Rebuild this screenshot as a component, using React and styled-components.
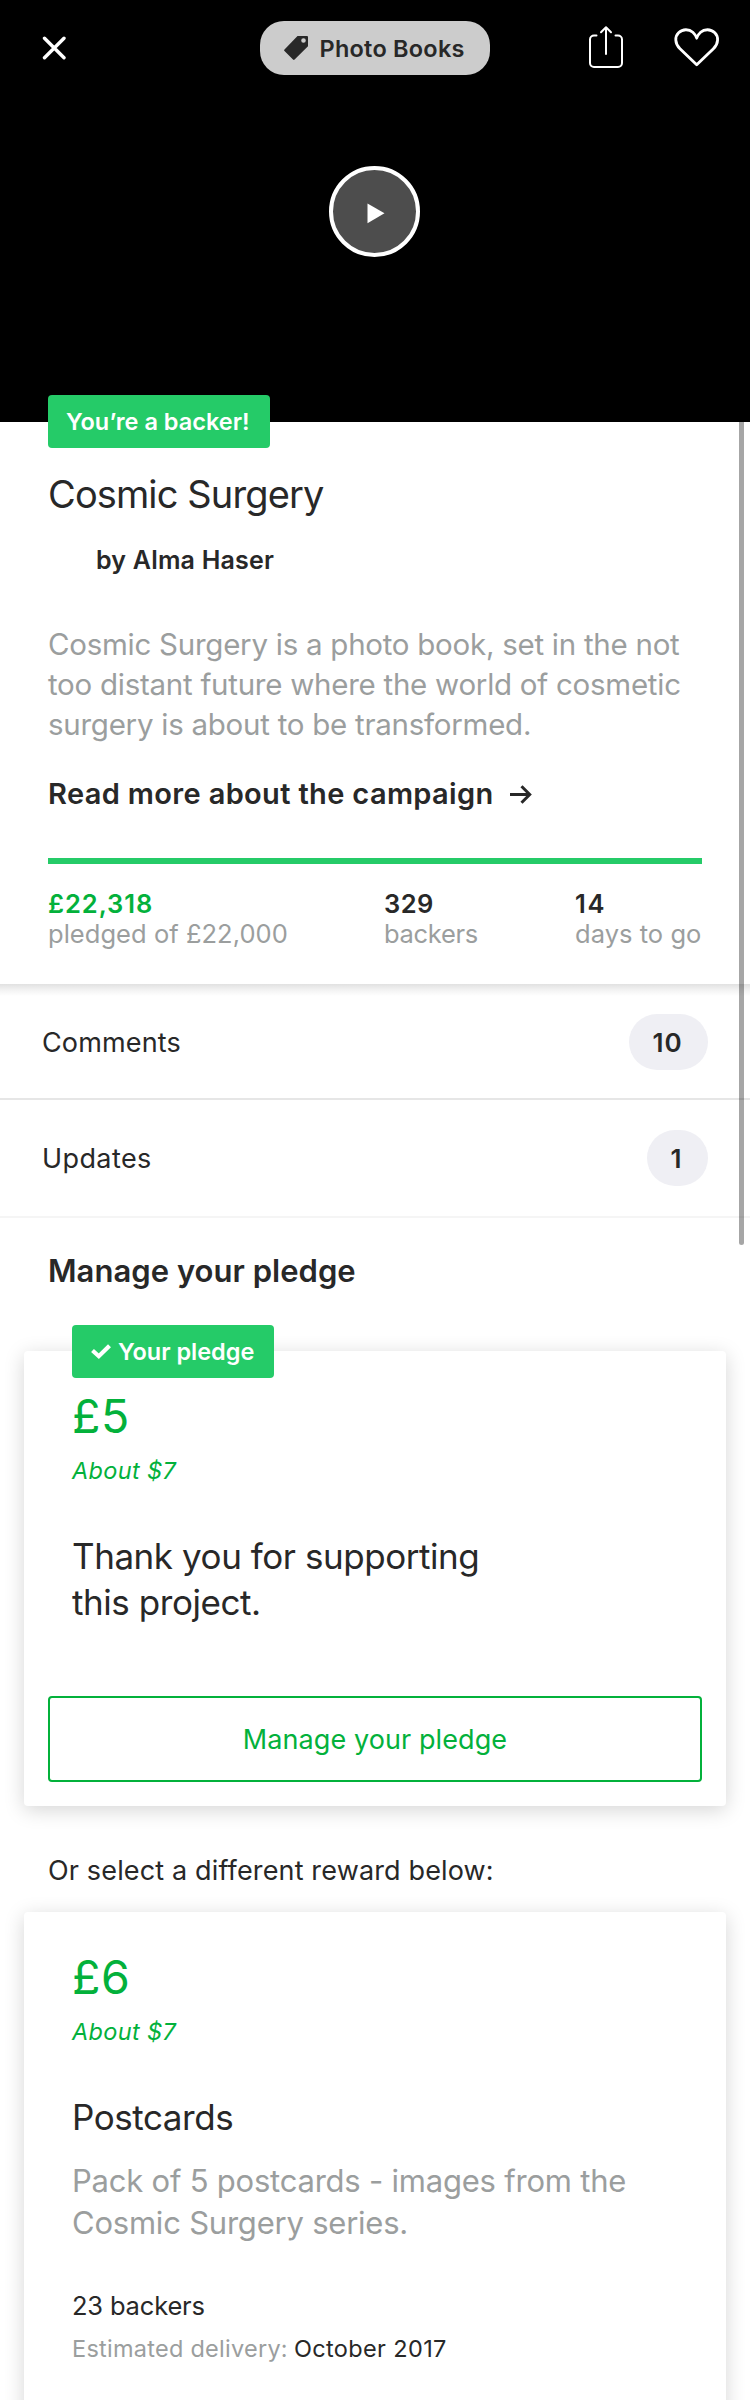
import React from 'react';
import styled, { createGlobalStyle } from 'styled-components';

const ink = '#282828';
const grey = '#9b9e9e';
const green = '#25cb68';
const deepGreen = '#03b13b';

const GlobalStyle = createGlobalStyle`
  * { box-sizing: border-box; }
  body {
    margin: 0;
    background: #fff;
    color: ${ink};
    font-family: Inter, "Liberation Sans", sans-serif;
    -webkit-font-smoothing: antialiased;
  }
  h1, h2, h3, p { margin: 0; font-weight: 400; }
  button { font-family: inherit; cursor: pointer; }
`;

const Page = styled.main`
  position: relative;
  width: 750px;
  height: 2400px;
  overflow: hidden;
  background: #fff;
`;

const Hero = styled.header`
  height: 422px;
  padding-top: 21px;
  background: #000;
`;

const TopBar = styled.nav`
  display: flex;
  align-items: center;
  height: 54px;
  padding-left: 42px;
`;

const IconButton = styled.button`
  display: flex;
  margin: 0 0 0 ${(p) => p.$gap || 0}px;
  padding: 0;
  border: 0;
  background: none;
  color: #fff;
`;

const CategoryPill = styled.a`
  display: flex;
  align-items: center;
  gap: 11.5px;
  width: 230px;
  height: 54px;
  margin-left: 194px;
  padding-left: 24px;
  border-radius: 24px;
  background: #ccc;
  font-size: 23.5px;
  font-weight: 600;
  letter-spacing: 0.24px;
  white-space: nowrap;
`;

const PlayButton = styled.button`
  display: flex;
  align-items: center;
  justify-content: center;
  width: 91px;
  height: 91px;
  margin: 91px 0 0 329px;
  padding: 0;
  border: 4px solid #fff;
  border-radius: 50%;
  background: #4d4d4d;
`;

const Tag = styled.div`
  display: flex;
  align-items: center;
  height: 53px;
  border-radius: 4px;
  background: ${green};
  color: #fff;
  font-size: 23.5px;
  font-weight: 600;
  white-space: nowrap;
`;

const BackerTag = styled(Tag)`
  position: relative;
  width: 222px;
  padding-left: 18px;
`;

const PledgeTag = styled(Tag)`
  position: absolute;
  top: -26px;
  left: 48px;
  width: 202px;
  padding-left: 18.5px;
  gap: 7.5px;
`;

const Summary = styled.section`
  position: relative;
  height: 589px;
  margin-top: -27px;
  padding: 0 48px;

  &::after {
    content: '';
    position: absolute;
    top: 100%;
    left: 0;
    right: 0;
    height: 12px;
    background: linear-gradient(#e1e1e1, #f4f4f4 55%, #fff);
  }
`;

const Title = styled.h1`
  margin-top: 22px;
  font-size: 38px;
  line-height: 48px;
  letter-spacing: -0.88px;
`;

const Creator = styled.p`
  margin-top: 26px;
  padding-left: 48px;
  font-size: 25px;
  line-height: 32px;
  font-weight: 600;
  letter-spacing: 0.2px;
`;

const Blurb = styled.p`
  margin-top: 48px;
  color: ${grey};
  font-size: 29.5px;
  line-height: 40px;
  letter-spacing: -0.26px;
  white-space: nowrap;
`;

const ReadMore = styled.a`
  display: flex;
  align-items: center;
  gap: 15px;
  margin-top: 30px;
  font-size: 29px;
  line-height: 40px;
  font-weight: 600;
  letter-spacing: 0.35px;
`;

const Progress = styled.div`
  height: 6px;
  margin-top: 44px;
  background: ${green};
`;

const Stats = styled.div`
  display: grid;
  grid-template-columns: 336px 191px 1fr;
  margin-top: 25px;
  font-size: 25.5px;
  line-height: 30px;
  white-space: nowrap;
`;

const StatValue = styled.div`
  color: ${(p) => (p.$accent ? deepGreen : ink)};
  font-weight: 600;
  letter-spacing: ${(p) => p.$track || 0.45}px;
`;

const StatLabel = styled.div`
  color: ${grey};
  letter-spacing: ${(p) => p.$track || 0.04}px;
`;

const ListRow = styled.a`
  display: flex;
  align-items: center;
  justify-content: space-between;
  padding: 30px 42px ${(p) => (p.$last ? 30 : 28)}px;
  border-bottom: 2px solid ${(p) => (p.$last ? '#f5f5f5' : '#e6e6e6')};
  font-size: 27px;
  letter-spacing: ${(p) => p.$track}px;
`;

const Count = styled.span`
  display: flex;
  align-items: center;
  justify-content: center;
  width: ${(p) => p.$width}px;
  height: 56px;
  padding-right: 2px;
  border-radius: 28px;
  background: #efeff4;
  font-size: 26px;
  font-weight: 600;
  letter-spacing: 1px;
`;

const SectionHeading = styled.h2`
  margin: 33px 0 60px 48px;
  font-size: 31px;
  line-height: 40px;
  font-weight: 600;
  letter-spacing: 0.03px;
`;

const RewardCard = styled.article`
  position: relative;
  margin: 0 24px;
  padding: 37px 48px 24px;
  border-radius: 4px;
  background: #fff;
  box-shadow: 0 4px 20px rgba(0, 0, 0, 0.17);
`;

const Amount = styled.div`
  color: ${deepGreen};
  font-size: 46.5px;
  line-height: 56px;
  letter-spacing: 0.5px;
`;

const Converted = styled.div`
  margin-top: 12px;
  color: ${deepGreen};
  font-size: 23.5px;
  line-height: 30px;
  font-style: italic;
  letter-spacing: 0.35px;
`;

const RewardTitle = styled.h3`
  margin-top: 47px;
  font-size: 35px;
  line-height: 46px;
  letter-spacing: -0.44px;
`;

const OutlineButton = styled.button`
  display: block;
  width: 654px;
  height: 86px;
  margin: 71px -24px 0;
  padding: 0;
  border: 2px solid ${deepGreen};
  border-radius: 4px;
  background: #fff;
  color: ${deepGreen};
  font-size: 27px;
  letter-spacing: 0.09px;
`;

const Hint = styled.p`
  margin: 47px 0 23px 48px;
  font-size: 27px;
  line-height: 36px;
  letter-spacing: 0.15px;
`;

const RewardText = styled.p`
  margin-top: 20px;
  color: ${grey};
  font-size: 31px;
  line-height: 42px;
  letter-spacing: -0.22px;
  white-space: nowrap;
`;

const Backers = styled.div`
  margin-top: 46px;
  font-size: 25.5px;
  line-height: 32px;
  letter-spacing: -0.18px;
`;

const Delivery = styled.div`
  display: flex;
  gap: 6px;
  margin-top: 12px;
  padding-bottom: 60px;
  font-size: 23.5px;
  line-height: 30px;
  letter-spacing: 0.36px;
`;

const DeliveryLabel = styled.span`
  color: ${grey};
  letter-spacing: 0.26px;
`;

const ScrollThumb = styled.div`
  position: absolute;
  top: 422px;
  right: 6px;
  width: 5px;
  height: 823px;
  border-radius: 0 0 3px 3px;
  background: rgba(0, 0, 0, 0.35);
`;

const CloseIcon = () => (
  <svg width="24" height="24" fill="none" stroke="currentColor" strokeWidth="3.4" strokeLinecap="round">
    <path d="M2.500 2.200 22 21.700M22 2.200 2.500 21.700" />
  </svg>
);

const TagIcon = () => (
  <svg width="24" height="24" fill={ink}>
    <path fillRule="evenodd" d="M13.5 0H23q1 0 1 1v9.3L10.6 23.5q-.8.8-1.6 0L.5 15q-.8-.8 0-1.6ZM19.5 2.2a2.3 2.3 0 1 0 0 4.6 2.3 2.3 0 0 0 0-4.6Z" />
  </svg>
);

const ShareIcon = () => (
  <svg width="36" height="54" fill="none" stroke="currentColor" strokeWidth="2" strokeLinecap="round" strokeLinejoin="round">
    <path d="M8.5 14.5H6a4 4 0 0 0-4 4V42a4 4 0 0 0 4 4h24a4 4 0 0 0 4-4V18.5a4 4 0 0 0-4-4h-2.5M18 33V7M13 11.3 18 6.300l5 5" />
  </svg>
);

const HeartIcon = () => (
  <svg width="46" height="54" fill="none" stroke="currentColor" strokeWidth="2.8" strokeLinejoin="round">
    <path d="M22.7 43.8 6 27.8C.5 22.3.8 15.5 4.6 11.8c4.2-4.2 10.6-3.8 14.2-.5 1.9 1.7 3.2 3.700 3.900 5.900.7-2.200 2-4.200 3.900-5.900 3.600-3.300 10-3.700 14.200.5 3.800 3.700 4.100 10.500-1.400 16Z" />
  </svg>
);

const PlayIcon = () => (
  <svg width="24" height="24" fill="#fff">
    <path d="M4.5 3.500 21.500 13.300 4.500 23.300Z" />
  </svg>
);

const ArrowIcon = () => (
  <svg width="24" height="20" fill="none" stroke={ink} strokeWidth="3">
    <path d="M1 10.5H21M12.500 2.300 20.700 10.500 12.500 18.700" />
  </svg>
);

const CheckIcon = () => (
  <svg width="20" height="16" fill="none" stroke="#fff" strokeWidth="4.2">
    <path d="M1.500 6.500 7.800 12.200 18.500 1.700" />
  </svg>
);

export default function App() {
  return (
    <Page>
      <GlobalStyle />
      <Hero>
        <TopBar>
          <IconButton aria-label="Close"><CloseIcon /></IconButton>
          <CategoryPill><TagIcon />Photo Books</CategoryPill>
          <IconButton aria-label="Share" $gap={98}><ShareIcon /></IconButton>
          <IconButton aria-label="Save" $gap={50}><HeartIcon /></IconButton>
        </TopBar>
        <PlayButton aria-label="Play"><PlayIcon /></PlayButton>
      </Hero>

      <Summary>
        <BackerTag>You’re a backer!</BackerTag>
        <Title>Cosmic Surgery</Title>
        <Creator>by Alma Haser</Creator>
        <Blurb>
          Cosmic Surgery is a photo book, set in the not<br />
          too distant future where the world of cosmetic<br />
          surgery is about to be transformed.
        </Blurb>
        <ReadMore>Read more about the campaign<ArrowIcon /></ReadMore>
        <Progress />
        <Stats>
          <div>
            <StatValue $accent $track={0.94}>£22,318</StatValue>
            <StatLabel>pledged of £22,000</StatLabel>
          </div>
          <div>
            <StatValue>329</StatValue>
            <StatLabel $track={-0.3}>backers</StatLabel>
          </div>
          <div>
            <StatValue $track={1.6}>14</StatValue>
            <StatLabel>days to go</StatLabel>
          </div>
        </Stats>
      </Summary>

      <ListRow $track={0.15}>Comments<Count $width={79}>10</Count></ListRow>
      <ListRow $track={0.4} $last>Updates<Count $width={61}>1</Count></ListRow>

      <SectionHeading>Manage your pledge</SectionHeading>
      <RewardCard>
        <PledgeTag><CheckIcon />Your pledge</PledgeTag>
        <Amount>£5</Amount>
        <Converted>About $7</Converted>
        <RewardTitle>Thank you for supporting<br />this project.</RewardTitle>
        <OutlineButton>Manage your pledge</OutlineButton>
      </RewardCard>

      <Hint>Or select a different reward below:</Hint>
      <RewardCard>
        <Amount>£6</Amount>
        <Converted>About $7</Converted>
        <RewardTitle>Postcards</RewardTitle>
        <RewardText>
          Pack of 5 postcards - images from the<br />
          Cosmic Surgery series.
        </RewardText>
        <Backers>23 backers</Backers>
        <Delivery><DeliveryLabel>Estimated delivery:</DeliveryLabel>October 2017</Delivery>
      </RewardCard>
      <ScrollThumb />
    </Page>
  );
}
